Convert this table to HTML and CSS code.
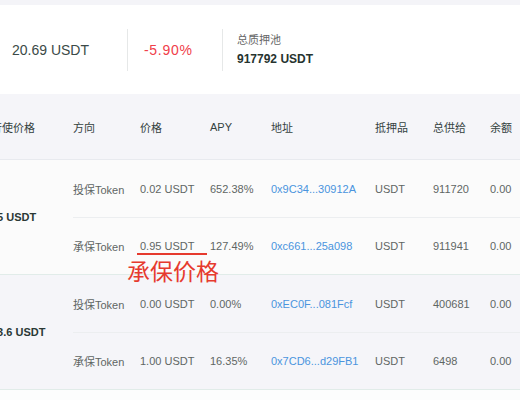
FILE: index.html
```html
<!DOCTYPE html>
<html lang="zh">
<head>
<meta charset="utf-8">
<link rel="stylesheet" href="styles.css">
</head>
<body>
<section class="stats">
  <div class="stat stat-price">20.69 USDT</div>
  <div class="sep"></div>
  <div class="stat stat-change">-5.90%</div>
  <div class="sep"></div>
  <div class="stat stat-pool">
    <div class="label">总质押池</div>
    <div class="value">917792 USDT</div>
  </div>
</section>
<section class="table">
  <div class="thead">
    <div>行使价格</div><div>方向</div><div>价格</div><div>APY</div><div>地址</div><div>抵押品</div><div>总供给</div><div>余额</div>
  </div>
  <div class="group light">
    <div class="strike">15 USDT</div>
    <div class="subrows">
      <div class="row"><span>投保Token</span><span>0.02 USDT</span><span>652.38%</span><span class="link">0x9C34...30912A</span><span>USDT</span><span>911720</span><span>0.00</span></div>
      <div class="row"><span>承保Token</span><span>0.95 USDT</span><span>127.49%</span><span class="link">0xc661...25a098</span><span>USDT</span><span>911941</span><span>0.00</span></div>
    </div>
  </div>
  <div class="group dim">
    <div class="strike">13.6 USDT</div>
    <div class="subrows">
      <div class="row"><span>投保Token</span><span>0.00 USDT</span><span>0.00%</span><span class="link">0xEC0F...081Fcf</span><span>USDT</span><span>400681</span><span>0.00</span></div>
      <div class="row"><span>承保Token</span><span>1.00 USDT</span><span>16.35%</span><span class="link">0x7CD6...d29FB1</span><span>USDT</span><span>6498</span><span>0.00</span></div>
    </div>
  </div>
  <div class="note-line"></div>
  <div class="note-text">承保价格</div>
</section>
</body>
</html>
```

FILE: styles.css
```css
* { box-sizing: border-box; }
html, body { margin: 0; padding: 0; }
body {
  width: 520px;
  height: 400px;
  overflow: hidden;
  background: #fcfdfd;
  font-family: "Liberation Sans", "Noto Sans CJK SC", sans-serif;
  color: #555;
}
.stats {
  display: flex;
  align-items: center;
  height: 94px;
  background: #fff;
  border-top: 5px solid #f4f4f8;
}
.stat-price {
  width: 127px;
  padding-left: 12px;
  font-size: 14px;
  color: #3b4a47;
}
.sep {
  width: 1px;
  height: 42px;
  background: #e6e8e8;
}
.stat-change {
  width: 94px;
  padding-left: 16px;
  font-size: 14px;
  letter-spacing: 0.7px;
  color: #f0404a;
}
.stat-pool { padding-left: 14px; }
.stat-pool .label {
  font-size: 11px;
  color: #666;
  line-height: 14px;
}
.stat-pool .value {
  margin-top: 5px;
  font-size: 12px;
  font-weight: bold;
  color: #26332f;
  line-height: 14px;
}
.table {
  position: relative;
  margin-left: -9px;
  width: 540px;
  font-size: 11px;
}
.thead {
  display: grid;
  grid-template-columns: 82px 67px 70px 61px 104px 58px 57px 1fr;
  align-items: center;
  height: 66px;
  background: #f5f5f9;
  border-bottom: 1px solid #e8eaef;
  color: #34423f;
}
.group {
  display: grid;
  grid-template-columns: 82px 1fr;
  border-bottom: 1px solid #e1ece9;
}
.group.light { background: #fbfbfb; }
.group.dim { background: #f5f5f9; }
.strike {
  align-self: center;
  font-weight: bold;
  color: #2a3835;
}
.row {
  display: grid;
  grid-template-columns: 67px 70px 61px 104px 58px 57px 1fr;
  align-items: center;
  height: 57px;
  color: #5f6664;
}
.row + .row { border-top: 1px solid #eceef0; }
.row .link { color: #4a94de; }
.note-line {
  position: absolute;
  left: 146px;
  top: 159px;
  width: 70px;
  height: 2px;
  background: #e63a2e;
}
.note-text {
  position: absolute;
  left: 136px;
  top: 166px;
  font-size: 23px;
  line-height: 24px;
  color: #e63a2e;
}
```
